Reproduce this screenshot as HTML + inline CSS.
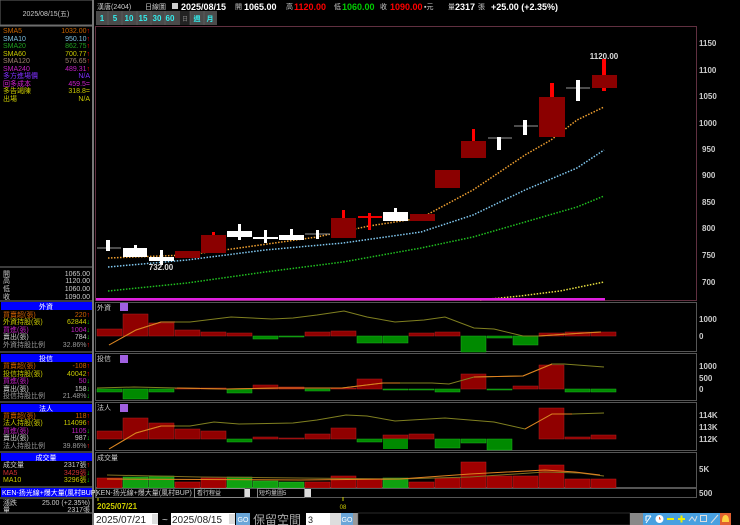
<!DOCTYPE html>
<html><head><meta charset="utf-8"><style>
html,body{margin:0;padding:0;background:#000;width:740px;height:525px;overflow:hidden}
svg{display:block}
text{font-family:"Liberation Sans","Noto Sans CJK TC",sans-serif}
.s{font-size:7px}
.b{font-weight:bold}
</style></head><body>
<svg width="740" height="525" viewBox="0 0 740 525" xmlns="http://www.w3.org/2000/svg">
<rect width="740" height="525" fill="#000"/>
<!-- left panel -->
<rect x="0" y="0" width="93" height="25" fill="#000" stroke="#666" stroke-width="1"/>
<text x="46" y="16" class="s" fill="#ccc" text-anchor="middle">2025/08/15(五)</text>
<line x1="93" y1="0" x2="93" y2="525" stroke="#777" stroke-width="2"/>
<line x1="0" y1="26" x2="93" y2="26" stroke="#777"/>
<g class="s">
<text x="3" y="33" fill="#c86400">SMA5</text><text x="90" y="33" fill="#c86400" text-anchor="end">1032.00<tspan fill="#f00">↑</tspan></text>
<text x="3" y="41" fill="#7ec0e0">SMA10</text><text x="90" y="41" fill="#7ec0e0" text-anchor="end">950.10<tspan fill="#f00">↑</tspan></text>
<text x="3" y="48" fill="#20a020">SMA20</text><text x="90" y="48" fill="#20a020" text-anchor="end">862.75<tspan fill="#f00">↑</tspan></text>
<text x="3" y="56" fill="#c8c800">SMA60</text><text x="90" y="56" fill="#c8c800" text-anchor="end">700.77<tspan fill="#f00">↑</tspan></text>
<text x="3" y="63" fill="#a08070">SMA120</text><text x="90" y="63" fill="#a08070" text-anchor="end">576.65<tspan fill="#f00">↑</tspan></text>
<text x="3" y="71" fill="#c020c0">SMA240</text><text x="90" y="71" fill="#c020c0" text-anchor="end">489.31<tspan fill="#f00">↑</tspan></text>
<text x="3" y="78" fill="#8030ff">多方進場價</text><text x="90" y="78" fill="#8030ff" text-anchor="end">N/A</text>
<text x="3" y="86" fill="#d020d0">回多成本</text><text x="90" y="86" fill="#d020d0" text-anchor="end">459.5=</text>
<text x="3" y="93" fill="#c8c800">多告竭陳</text><text x="90" y="93" fill="#c8c800" text-anchor="end">318.8=</text>
<text x="3" y="101" fill="#c8c800">出場</text><text x="90" y="101" fill="#c8c800" text-anchor="end">N/A</text>
</g>
<line x1="0" y1="267" x2="93" y2="267" stroke="#777"/>
<g class="s" fill="#ccc">
<text x="3" y="276">開</text><text x="90" y="276" text-anchor="end">1065.00</text>
<text x="3" y="283">高</text><text x="90" y="283" text-anchor="end">1120.00</text>
<text x="3" y="291">低</text><text x="90" y="291" text-anchor="end">1060.00</text>
<text x="3" y="299">收</text><text x="90" y="299" text-anchor="end">1090.00</text>
</g>
<!-- 外資 -->
<line x1="0" y1="301" x2="93" y2="301" stroke="#777"/>
<rect x="1" y="302" width="91" height="8" fill="#0000ff"/>
<text x="46" y="309" class="s" fill="#fff" text-anchor="middle">外資</text>
<g class="s">
<text x="3" y="317" fill="#d06000">買賣超(張)</text><text x="90" y="317" fill="#d06000" text-anchor="end">220<tspan fill="#f00">↑</tspan></text>
<text x="3" y="324" fill="#c8c800">外資持股(張)</text><text x="90" y="324" fill="#c8c800" text-anchor="end">62844<tspan fill="#0c0">↓</tspan></text>
<text x="3" y="332" fill="#c020c0">買進(張)</text><text x="90" y="332" fill="#c020c0" text-anchor="end">1004<tspan fill="#0c0">↓</tspan></text>
<text x="3" y="339" fill="#ccc">賣出(張)</text><text x="90" y="339" fill="#ccc" text-anchor="end">784<tspan fill="#0c0">↓</tspan></text>
<text x="3" y="347" fill="#999">外資持股比例</text><text x="90" y="347" fill="#999" text-anchor="end">32.86%<tspan fill="#f00">↑</tspan></text>
</g>
<line x1="0" y1="352" x2="93" y2="352" stroke="#777"/>
<rect x="1" y="354" width="91" height="8" fill="#0000ff"/>
<text x="46" y="361" class="s" fill="#fff" text-anchor="middle">投信</text>
<g class="s">
<text x="3" y="368" fill="#d06000">買賣超(張)</text><text x="90" y="368" fill="#d06000" text-anchor="end">-108<tspan fill="#f00">↑</tspan></text>
<text x="3" y="376" fill="#c8c800">投信持股(張)</text><text x="90" y="376" fill="#c8c800" text-anchor="end">40042<tspan fill="#f00">↑</tspan></text>
<text x="3" y="383" fill="#c020c0">買進(張)</text><text x="90" y="383" fill="#c020c0" text-anchor="end">50<tspan fill="#0c0">↓</tspan></text>
<text x="3" y="391" fill="#ccc">賣出(張)</text><text x="90" y="391" fill="#ccc" text-anchor="end">158<tspan fill="#0c0">↓</tspan></text>
<text x="3" y="398" fill="#999">投信持股比例</text><text x="90" y="398" fill="#999" text-anchor="end">21.48%<tspan fill="#0c0">↓</tspan></text>
</g>
<line x1="0" y1="402" x2="93" y2="402" stroke="#777"/>
<rect x="1" y="404" width="91" height="8" fill="#0000ff"/>
<text x="46" y="411" class="s" fill="#fff" text-anchor="middle">法人</text>
<g class="s">
<text x="3" y="418" fill="#d06000">買賣超(張)</text><text x="90" y="418" fill="#d06000" text-anchor="end">118<tspan fill="#f00">↑</tspan></text>
<text x="3" y="425" fill="#c8c800">法人持股(張)</text><text x="90" y="425" fill="#c8c800" text-anchor="end">114096<tspan fill="#f00">↑</tspan></text>
<text x="3" y="433" fill="#c020c0">買進(張)</text><text x="90" y="433" fill="#c020c0" text-anchor="end">1105<tspan fill="#0c0">↓</tspan></text>
<text x="3" y="440" fill="#ccc">賣出(張)</text><text x="90" y="440" fill="#ccc" text-anchor="end">987<tspan fill="#0c0">↓</tspan></text>
<text x="3" y="448" fill="#999">法人持股比例</text><text x="90" y="448" fill="#999" text-anchor="end">39.86%<tspan fill="#f00">↑</tspan></text>
</g>
<line x1="0" y1="452" x2="93" y2="452" stroke="#777"/>
<rect x="1" y="453" width="91" height="8" fill="#0000ff"/>
<text x="46" y="460" class="s" fill="#fff" text-anchor="middle">成交量</text>
<g class="s">
<text x="3" y="467" fill="#ccc">成交量</text><text x="90" y="467" fill="#ccc" text-anchor="end">2317張<tspan fill="#f00">↑</tspan></text>
<text x="3" y="475" fill="#d03030">MA5</text><text x="90" y="475" fill="#d03030" text-anchor="end">3429張<tspan fill="#0c0">↓</tspan></text>
<text x="3" y="482" fill="#c8c800">MA10</text><text x="90" y="482" fill="#c8c800" text-anchor="end">3296張<tspan fill="#0c0">↓</tspan></text>
</g>
<line x1="0" y1="487" x2="93" y2="487" stroke="#777"/>
<rect x="1" y="488" width="91" height="9" fill="#0000ff"/>
<text x="2" y="495" class="s" fill="#fff">KEN-扬光線+爆大量(風村BUP)</text>
<line x1="0" y1="498" x2="93" y2="498" stroke="#777"/>
<g class="s" fill="#ccc">
<text x="3" y="505">漲跌</text><text x="90" y="505" text-anchor="end">25.00 (+2.35%)</text>
<text x="3" y="512">量</text><text x="90" y="512" text-anchor="end">2317張</text>
</g>
<line x1="0" y1="513" x2="93" y2="513" stroke="#777"/>

<!-- top header -->
<g font-size="8">
<text x="97" y="9" fill="#ccc" class="s">漢唐(2404)</text>
<text x="145" y="9" fill="#ccc" class="s">日線圖</text>
<rect x="172" y="3" width="6" height="6" fill="#ccc"/>
<text x="181" y="10" fill="#fff" class="b" font-size="9">2025/08/15</text>
<text x="235" y="9" fill="#ccc" class="s">開</text>
<text x="244" y="10" fill="#fff" class="b" font-size="9">1065.00</text>
<text x="286" y="9" fill="#ccc" class="s">高</text>
<text x="294" y="10" fill="#f00" class="b" font-size="9">1120.00</text>
<text x="334" y="9" fill="#ccc" class="s">低</text>
<text x="342" y="10" fill="#0c0" class="b" font-size="9">1060.00</text>
<text x="380" y="9" fill="#ccc" class="s">收</text>
<text x="390" y="10" fill="#f00" class="b" font-size="9">1090.00</text>
<text x="424" y="9" fill="#ccc" class="s">▪元</text>
<text x="448" y="9" fill="#ccc" class="s">量</text>
<text x="455" y="10" fill="#fff" class="b" font-size="9">2317</text>
<text x="478" y="9" fill="#ccc" class="s">張</text>
<text x="491" y="10" fill="#fff" class="b" font-size="9">+25.00 (+2.35%)</text>
</g>
<!-- buttons -->
<rect x="96" y="11" width="121" height="14" fill="#4a4a4a"/>
<rect x="180" y="11" width="10" height="14" fill="#222"/>
<g font-size="8" fill="#3ee" class="b" text-anchor="middle">
<text x="102" y="21">1</text><text x="115" y="21">5</text><text x="129" y="21">10</text><text x="143" y="21">15</text><text x="157" y="21">30</text><text x="170" y="21">60</text>
<text x="185" y="21" fill="#888" font-weight="normal" font-size="6">日</text><text x="197" y="21" font-size="7">週</text><text x="210" y="21" font-size="7">月</text>
</g>
<g stroke="#666" stroke-width="0.6"><line x1="108" y1="11" x2="108" y2="25"/><line x1="122" y1="11" x2="122" y2="25"/><line x1="137" y1="11" x2="137" y2="25"/><line x1="151" y1="11" x2="151" y2="25"/><line x1="165" y1="11" x2="165" y2="25"/><line x1="190" y1="11" x2="190" y2="25"/><line x1="204" y1="11" x2="204" y2="25"/></g>

<!-- main chart -->
<rect x="95.5" y="26.5" width="601" height="274" fill="none" stroke="#603040"/>
<g font-size="8" fill="#ccc" class="b">
<text x="699" y="46">1150</text><text x="699" y="73">1100</text><text x="699" y="99">1050</text><text x="699" y="126">1000</text><text x="702" y="152">950</text><text x="702" y="178">900</text><text x="702" y="205">850</text><text x="702" y="231">800</text><text x="702" y="258">750</text><text x="702" y="285">700</text>
</g>
<!-- MA lines -->
<polyline fill="none" stroke="#e8e040" stroke-width="1.5" stroke-dasharray="1.5,1.5" points="480,300 520,296 560,291 604,282"/>
<polyline fill="none" stroke="#20c020" stroke-width="1.5" stroke-dasharray="1.5,1.5" points="108,291 187,283 265,272 343,262 421,248 473,237 525,222 577,207 604,196"/>
<polyline fill="none" stroke="#80c8f0" stroke-width="1.5" stroke-dasharray="1.5,1.5" points="108,267 187,260 265,250 343,243 421,232 473,215 525,190 577,168 604,150"/>
<polyline fill="none" stroke="#f0a030" stroke-width="1.5" stroke-dasharray="1.5,1.5" points="108,258 187,255 239,248 317,237 369,226 421,218 473,190 525,155 551,140 577,120 604,107"/>
<rect x="96" y="298" width="509" height="2.5" fill="#e020e0"/>
<!-- candles -->
<g>
<line x1="97" y1="248" x2="121" y2="248" stroke="#999"/>
<rect x="106" y="240" width="4" height="11" fill="#fff"/>
<rect x="134" y="245" width="3" height="12" fill="#fff"/><rect x="123" y="248" width="24" height="9" fill="#fff"/>
<rect x="160" y="250" width="3" height="15" fill="#fff"/><rect x="149" y="257" width="25" height="4" fill="#fff"/>
<text x="161" y="270" font-size="8" fill="#ddd" class="b" text-anchor="middle">732.00</text>
<rect x="175" y="251" width="25" height="7" fill="#8b0000"/>
<rect x="212" y="232" width="3" height="4" fill="#f00"/><rect x="201" y="235" width="25" height="18" fill="#8b0000"/>
<rect x="238" y="224" width="3" height="16" fill="#fff"/><rect x="227" y="231" width="25" height="6" fill="#fff"/>
<rect x="264" y="230" width="3" height="13" fill="#fff"/><rect x="253" y="237" width="25" height="2" fill="#fff"/>
<rect x="290" y="229" width="3" height="11" fill="#fff"/><rect x="279" y="235" width="25" height="5" fill="#fff"/>
<line x1="305" y1="234" x2="330" y2="234" stroke="#999"/><rect x="316" y="230" width="3" height="9" fill="#fff"/>
<rect x="342" y="210" width="3" height="8" fill="#f00"/><rect x="331" y="218" width="25" height="20" fill="#8b0000"/>
<rect x="358" y="216" width="24" height="2" fill="#e00"/><rect x="368" y="213" width="3" height="17" fill="#f00"/>
<rect x="394" y="208" width="3" height="5" fill="#fff"/><rect x="383" y="212" width="25" height="9" fill="#fff"/>
<rect x="410" y="214" width="25" height="7" fill="#8b0000"/>
<rect x="435" y="170" width="25" height="18" fill="#8b0000"/>
<rect x="472" y="129" width="3" height="12" fill="#f00"/><rect x="461" y="141" width="25" height="17" fill="#8b0000"/>
<line x1="488" y1="138" x2="512" y2="138" stroke="#999"/><rect x="497" y="137" width="4" height="13" fill="#fff"/>
<line x1="514" y1="126" x2="538" y2="126" stroke="#999"/><rect x="523" y="120" width="4" height="15" fill="#fff"/>
<rect x="550" y="83" width="4" height="14" fill="#f00"/><rect x="539" y="97" width="26" height="40" fill="#8b0000"/>
<line x1="566" y1="88" x2="590" y2="88" stroke="#999"/><rect x="576" y="80" width="4" height="21" fill="#fff"/>
<rect x="602" y="59" width="4" height="32" fill="#f00"/><rect x="592" y="75" width="25" height="13" fill="#8b0000"/>
<text x="604" y="59" font-size="8" fill="#ddd" class="b" text-anchor="middle">1120.00</text>
</g>

<!-- sub panel 1 外資 -->
<rect x="95.5" y="302.5" width="601" height="49" fill="none" stroke="#555"/>
<text x="97" y="310" class="s" fill="#ccc">外資</text>
<rect x="120" y="303" width="8" height="8" fill="#a060e0"/>
<g fill="#900000" stroke="#b02020" stroke-width="0.5">
<rect x="97" y="329" width="25" height="7"/><rect x="123" y="314" width="25" height="22"/><rect x="149" y="323" width="25" height="13"/><rect x="175" y="330" width="25" height="6"/><rect x="201" y="332" width="25" height="4"/><rect x="227" y="333" width="25" height="3"/><rect x="305" y="332" width="25" height="4"/><rect x="331" y="331" width="25" height="5"/><rect x="409" y="333" width="25" height="3"/><rect x="435" y="332" width="25" height="4"/><rect x="539" y="333" width="25" height="3"/><rect x="565" y="332" width="25" height="4"/><rect x="591" y="332" width="25" height="4"/>
</g>
<g fill="#008a00" stroke="#20b020" stroke-width="0.5">
<rect x="253" y="336" width="25" height="3"/><rect x="279" y="336" width="25" height="1"/><rect x="357" y="336" width="25" height="7"/><rect x="383" y="336" width="25" height="7"/><rect x="461" y="336" width="25" height="16"/><rect x="487" y="336" width="25" height="2"/><rect x="513" y="336" width="25" height="9"/>
</g>
<polyline fill="none" stroke="#808020" points="109,345 136,330 161,322 190,322 231,317 272,319 293,318 317,315 344,311 367,317 395,322 424,320 445,317 474,328 494,329 523,336 539,336 568,334 601,332"/>
<polyline fill="none" stroke="#e08020" points="109,345 136,330 161,322 175,322"/>
<polyline fill="none" stroke="#e08020" points="539,336 568,334 601,332"/>
<g font-size="8" fill="#ccc" class="b"><text x="699" y="322">1000</text><text x="699" y="339">0</text></g>

<!-- sub panel 2 投信 -->
<rect x="95.5" y="353.5" width="601" height="47" fill="none" stroke="#555"/>
<text x="97" y="361" class="s" fill="#ccc">投信</text>
<rect x="120" y="355" width="8" height="8" fill="#a060e0"/>
<g fill="#900000" stroke="#b02020" stroke-width="0.5">
<rect x="175" y="388" width="25" height="1"/><rect x="201" y="388" width="25" height="1"/><rect x="253" y="385" width="25" height="4"/><rect x="279" y="387" width="25" height="2"/><rect x="331" y="388" width="25" height="1"/><rect x="357" y="379" width="25" height="10"/><rect x="461" y="374" width="25" height="15"/><rect x="513" y="386" width="25" height="3"/><rect x="539" y="365" width="25" height="24"/>
</g>
<g fill="#008a00" stroke="#20b020" stroke-width="0.5">
<rect x="97" y="389" width="25" height="3"/><rect x="123" y="389" width="25" height="10"/><rect x="149" y="389" width="25" height="3"/><rect x="227" y="389" width="25" height="4"/><rect x="305" y="389" width="25" height="2"/><rect x="383" y="389" width="25" height="1"/><rect x="409" y="389" width="25" height="1"/><rect x="435" y="389" width="25" height="3"/><rect x="487" y="389" width="25" height="1"/><rect x="565" y="389" width="25" height="3"/><rect x="591" y="389" width="25" height="3"/>
</g>
<polyline fill="none" stroke="#808020" points="97,388 134,387 177,388 227,389 280,388 342,388 383,383 432,383 449,384 474,377 523,376 552,364 564,364 604,367"/>
<polyline fill="none" stroke="#e08020" points="177,388 227,389 280,388 342,388 383,383 400,383"/>
<polyline fill="none" stroke="#e08020" points="474,377 523,376 552,364"/>
<g font-size="8" fill="#ccc" class="b"><text x="699" y="369">1000</text><text x="699" y="381">500</text><text x="699" y="392">0</text></g>

<!-- sub panel 3 法人 -->
<rect x="95.5" y="402.5" width="601" height="48" fill="none" stroke="#555"/>
<text x="97" y="410" class="s" fill="#ccc">法人</text>
<rect x="120" y="404" width="8" height="8" fill="#a060e0"/>
<g fill="#900000" stroke="#b02020" stroke-width="0.5">
<rect x="97" y="431" width="25" height="8"/><rect x="123" y="418" width="25" height="21"/><rect x="149" y="423" width="25" height="16"/><rect x="175" y="429" width="25" height="10"/><rect x="201" y="431" width="25" height="8"/><rect x="253" y="437" width="25" height="2"/><rect x="279" y="438" width="25" height="1"/><rect x="305" y="434" width="25" height="5"/><rect x="331" y="428" width="25" height="11"/><rect x="383" y="435" width="25" height="4"/><rect x="409" y="434" width="25" height="5"/><rect x="539" y="408" width="25" height="31"/><rect x="565" y="437" width="25" height="2"/><rect x="591" y="435" width="25" height="4"/>
</g>
<g fill="#008a00" stroke="#20b020" stroke-width="0.5">
<rect x="227" y="439" width="25" height="3"/><rect x="357" y="439" width="25" height="3"/><rect x="383" y="439" width="0" height="0"/><rect x="383" y="439" width="25" height="0.1"/><rect x="435" y="439" width="25" height="9"/><rect x="461" y="439" width="25" height="4"/><rect x="487" y="439" width="25" height="11"/>
</g>
<rect x="383" y="439" width="25" height="10" fill="#008a00"/>
<polyline fill="none" stroke="#808020" points="109,449 136,433 161,426 190,426 214,422 239,424 293,423 317,420 346,415 367,416 395,421 445,418 494,422 525,429 552,414 572,414 604,413"/>
<polyline fill="none" stroke="#e08020" points="109,449 136,433 161,426 175,426"/>
<polyline fill="none" stroke="#e08020" points="525,429 552,414 572,414"/>
<g font-size="8" fill="#ccc" class="b"><text x="699" y="418">114K</text><text x="699" y="430">113K</text><text x="699" y="442">112K</text></g>

<!-- volume panel -->
<rect x="95.5" y="452.5" width="601" height="35" fill="none" stroke="#555"/>
<text x="97" y="460" class="s" fill="#ccc">成交量</text>
<g fill="#a00000" stroke="#c02020" stroke-width="0.5">
<rect x="97" y="478" width="25" height="10"/><rect x="175" y="482" width="25" height="6"/><rect x="201" y="478" width="25" height="10"/><rect x="305" y="482" width="25" height="6"/><rect x="331" y="476" width="25" height="12"/><rect x="357" y="479" width="25" height="9"/><rect x="409" y="482" width="25" height="6"/><rect x="435" y="478" width="25" height="10"/><rect x="461" y="462" width="25" height="26"/><rect x="487" y="476" width="25" height="12"/><rect x="513" y="476" width="25" height="12"/><rect x="539" y="465" width="25" height="23"/><rect x="565" y="479" width="25" height="9"/><rect x="591" y="479" width="25" height="9"/>
</g>
<g fill="#10a010" stroke="#30c030" stroke-width="0.5">
<rect x="123" y="477" width="25" height="11"/><rect x="149" y="476" width="25" height="12"/><rect x="227" y="477" width="25" height="11"/><rect x="253" y="481" width="25" height="7"/><rect x="279" y="482" width="25" height="6"/><rect x="383" y="478" width="25" height="10"/>
</g>
<polyline fill="none" stroke="#807020" points="107,475 200,477 300,478 400,479 470,477 545,472 580,473 604,476"/>
<polyline fill="none" stroke="#e08020" points="107,479 300,480 400,479 470,474 545,470 575,472 600,475"/>
<text x="699" y="472" font-size="8" fill="#ccc" class="b">5K</text>
<rect x="95.5" y="488.5" width="601" height="9" fill="none" stroke="#555"/>
<text x="699" y="496" font-size="8" fill="#ccc" class="b">500</text>
<text x="96" y="495" class="s" fill="#ccc">KEN-扬光線+爆大量(風村BUP)</text>
<rect x="194.5" y="488.5" width="50" height="9" fill="#000" stroke="#888"/>
<text x="197" y="495" font-size="6" fill="#ccc">看行程益</text>
<rect x="245" y="489" width="5" height="8" fill="#ddd"/>
<rect x="257.5" y="488.5" width="47" height="9" fill="#000" stroke="#888"/>
<text x="259" y="495" font-size="6" fill="#ccc">短均量圖5</text>
<rect x="305" y="489" width="6" height="8" fill="#ddd"/>
<line x1="98" y1="498" x2="98" y2="501" stroke="#cc0"/>
<text x="97" y="509" font-size="8" fill="#cc0" class="b">2025/07/21</text>
<line x1="343" y1="497" x2="343" y2="501" stroke="#cc0"/>
<text x="343" y="509" font-size="6" fill="#cc0" text-anchor="middle">08</text>

<!-- bottom row -->
<rect x="94" y="513" width="64" height="12" fill="#fff"/>
<text x="96" y="523" font-size="10" fill="#222">2025/07/21</text>
<rect x="152" y="514" width="6" height="10" fill="#ddd"/>
<text x="162" y="523" font-size="10" fill="#ccc">~</text>
<rect x="171" y="513" width="64" height="12" fill="#fff"/>
<text x="172" y="523" font-size="10" fill="#222">2025/08/15</text>
<rect x="229" y="514" width="6" height="10" fill="#ddd"/>
<rect x="236" y="513" width="14" height="12" fill="#6aa6d8"/>
<text x="243" y="522" font-size="7" fill="#fff" text-anchor="middle">GO</text>
<text x="253" y="524" font-size="12" fill="#aaa">保留空間</text>
<rect x="306" y="513" width="24" height="12" fill="#fff"/>
<text x="308" y="523" font-size="9" fill="#222">3</text>
<rect x="330" y="513" width="11" height="12" fill="#ddd"/>
<rect x="341" y="513" width="12" height="12" fill="#6aa6d8"/>
<text x="347" y="522" font-size="7" fill="#fff" text-anchor="middle">GO</text>
<rect x="353" y="513" width="5" height="12" fill="#999"/>
<rect x="358" y="513" width="272" height="12" fill="#000" stroke="#555" stroke-width="0.5"/>
<rect x="630" y="513" width="13" height="12" fill="#888"/>
<g fill="#48a0e0">
<rect x="643" y="513" width="11" height="12"/><rect x="654" y="513" width="11" height="12"/><rect x="665" y="513" width="11" height="12"/><rect x="676" y="513" width="11" height="12"/><rect x="687" y="513" width="11" height="12"/><rect x="698" y="513" width="11" height="12"/><rect x="709" y="513" width="11" height="12"/>
</g>
<rect x="720" y="513" width="11" height="12" fill="#e06030"/>
<path d="M646 523 L651 516 M646 516 L651 516 M646 516 L646 521" stroke="#fff" fill="none"/>
<circle cx="659.5" cy="519" r="4" fill="#fff"/><path d="M659.5 517 V519 H661" stroke="#e06030" fill="none"/>
<rect x="667" y="518" width="7" height="2" fill="#ee0"/>
<rect x="678" y="518" width="7" height="2" fill="#ee0"/><rect x="680.5" y="515.5" width="2" height="7" fill="#ee0"/>
<path d="M689 521 L692 517 L695 521 L697 516" stroke="#ddd" fill="none"/>
<rect x="700.5" y="515.5" width="6" height="6" stroke="#ddd" fill="none"/>
<path d="M711 523 L718 515" stroke="#ddd"/>
<path d="M722 522 Q722 515 725.5 515 Q729 515 729 522 Z" fill="#ffd040"/>
</svg>
</body></html>
